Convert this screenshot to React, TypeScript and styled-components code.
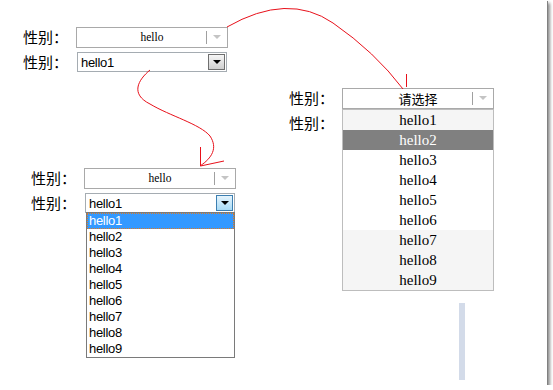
import styled, { createGlobalStyle } from "styled-components";

const GlobalStyle = createGlobalStyle`
  html, body {
    margin: 0;
    padding: 0;
    background: #fff;
  }
  body {
    font-family: "Liberation Sans", "Noto Sans CJK SC", sans-serif;
  }
`;

const Canvas = styled.div`
  position: relative;
  width: 547px;
  height: 385px;
  background: #fff;
  box-shadow: 1px 1px 0 #808080, 3px 3px 3px rgba(0, 0, 0, 0.45);
`;

// each demo sits where it was dropped on the screenshot
const Demo = styled.div<{ $x: number; $y: number }>`
  position: absolute;
  left: ${(p) => p.$x}px;
  top: ${(p) => p.$y}px;
  display: flex;
  flex-direction: column;
  gap: 5px;
`;

const Row = styled.div`
  display: flex;
  align-items: center;
  height: 20px;
`;

const Label = styled.span`
  width: 53px;
  font-family: "Noto Sans CJK SC", sans-serif;
  font-size: 15px;
  line-height: 20px;
  color: #000;
`;

/* styled (fake) select */
const FancySelect = styled.div`
  position: relative;
  width: 152px;
  height: 21px;
  box-sizing: border-box;
  border: 1px solid #a9a9a9;
  background: #fff;
  display: flex;
  z-index: 2;
`;

const FancyValue = styled.span<{ $cjk?: boolean }>`
  flex: 1;
  padding-left: 21px;
  text-align: center;
  color: #000;
  font-family: ${(p) =>
    p.$cjk ? `"Noto Sans CJK SC", sans-serif` : `"Liberation Serif", serif`};
  font-size: ${(p) => (p.$cjk ? "13px" : "11.5px")};
  line-height: 19px;
`;

const FancyArrow = styled.span`
  width: 20px;
  margin: 3px 0;
  border-left: 1px solid #a0a0a0;
  display: flex;
  align-items: center;
  justify-content: center;

  &::after {
    content: "";
    border-left: 4px solid transparent;
    border-right: 4px solid transparent;
    border-top: 4px solid #c4c4c4;
  }
`;

const FancyList = styled.ul`
  position: absolute;
  top: calc(100% + 1px);
  left: -1px;
  width: 152px;
  margin: 0;
  padding: 0;
  list-style: none;
  box-sizing: border-box;
  border: 1px solid #bdbdbd;
  background: #fff;
`;

const FancyItem = styled.li<{ $tone: "plain" | "soft" | "hot" }>`
  height: 20px;
  line-height: 20px;
  text-align: center;
  font-family: "Liberation Serif", serif;
  font-size: 15px;
  color: ${(p) => (p.$tone === "hot" ? "#fff" : "#000")};
  background: ${(p) =>
    p.$tone === "hot" ? "#808080" : p.$tone === "soft" ? "#f5f5f5" : "#fff"};
`;

/* native windows select */
const NativeSelect = styled.div`
  position: relative;
  width: 150px;
  height: 20px;
  margin-left: 1px;
  box-sizing: border-box;
  border: 1px solid #a5acb2;
  background: #fff;
  display: flex;
  align-items: center;
`;

const NativeText = styled.span`
  flex: 1;
  padding-left: 3px;
  font-family: "Liberation Sans", sans-serif;
  font-size: 13px;
  letter-spacing: -0.3px;
  color: #000;
`;

const DropButton = styled.span<{ $hot?: boolean }>`
  width: 17px;
  height: 16px;
  margin-right: 1px;
  box-sizing: border-box;
  border: 1px solid ${(p) => (p.$hot ? "#3c7fb1" : "#6f6f6f")};
  background: ${(p) =>
    p.$hot
      ? "linear-gradient(#e5f4fd, #a9dbf6)"
      : "linear-gradient(#f6f6f6, #cfcfcf)"};
  display: flex;
  align-items: center;
  justify-content: center;

  &::after {
    content: "";
    border-left: 4px solid transparent;
    border-right: 4px solid transparent;
    border-top: 4px solid #000;
  }
`;

const NativeList = styled.ul`
  position: absolute;
  top: 100%;
  left: 0;
  width: 149px;
  margin: 0;
  padding: 0;
  list-style: none;
  box-sizing: border-box;
  border: 1px solid #7a7a7a;
  background: #fff;
  z-index: 3;
`;

const NativeItem = styled.li<{ $selected?: boolean }>`
  height: 16px;
  line-height: 16px;
  padding-left: 2px;
  box-sizing: border-box;
  font-family: "Liberation Sans", sans-serif;
  font-size: 13px;
  letter-spacing: -0.3px;
  color: ${(p) => (p.$selected ? "#fff" : "#000")};
  background: ${(p) => (p.$selected ? "#3399ff" : "transparent")};
  outline: ${(p) => (p.$selected ? "1px dotted #e07a1f" : "none")};
  outline-offset: -1px;
`;

const Scrollbar = styled.div`
  position: absolute;
  left: 459px;
  top: 303px;
  width: 6px;
  height: 77px;
  background: #d3dbe9;
`;

const Arrows = styled.svg`
  position: absolute;
  left: 0;
  top: 0;
  pointer-events: none;
  z-index: 5;
`;

const options = [1, 2, 3, 4, 5, 6, 7, 8, 9].map((n) => `hello${n}`);

const toneFor = (i: number): "plain" | "soft" | "hot" => {
  if (i === 1) return "hot";
  if (i === 0 || i >= 6) return "soft";
  return "plain";
};

export default function App() {
  return (
    <>
      <GlobalStyle />
      <Canvas>
        <Demo $x={23} $y={27}>
          <Row>
            <Label>性别：</Label>
            <FancySelect>
              <FancyValue>hello</FancyValue>
              <FancyArrow />
            </FancySelect>
          </Row>
          <Row>
            <Label>性别：</Label>
            <NativeSelect>
              <NativeText>hello1</NativeText>
              <DropButton />
            </NativeSelect>
          </Row>
        </Demo>

        <Demo $x={289} $y={88}>
          <Row>
            <Label>性别：</Label>
            <FancySelect>
              <FancyValue $cjk>请选择</FancyValue>
              <FancyArrow />
              <FancyList>
                {options.map((o, i) => (
                  <FancyItem key={o} $tone={toneFor(i)}>
                    {o}
                  </FancyItem>
                ))}
              </FancyList>
            </FancySelect>
          </Row>
          <Row>
            <Label>性别：</Label>
          </Row>
        </Demo>

        <Demo $x={31} $y={168}>
          <Row>
            <Label>性别：</Label>
            <FancySelect>
              <FancyValue>hello</FancyValue>
              <FancyArrow />
            </FancySelect>
          </Row>
          <Row>
            <Label>性别：</Label>
            <NativeSelect>
              <NativeText>hello1</NativeText>
              <DropButton $hot />
              <NativeList>
                {options.map((o, i) => (
                  <NativeItem key={o} $selected={i === 0}>
                    {o}
                  </NativeItem>
                ))}
              </NativeList>
            </NativeSelect>
          </Row>
        </Demo>

        <Scrollbar />

        <Arrows width={547} height={385} viewBox="0 0 547 385">
          <g fill="none" stroke="#e8101a" strokeWidth={1}>
            <path d="M227 27 Q288 -8 333 23 Q375 52 403 89" />
            <path d="M406.5 74 L406.5 87" />
            <path d="M150 70 C138 80 130 94 150 104 C170 116 200 124 210 136 C218 148 212 158 200 166" />
            <path d="M200.5 147 L200.5 166 L224 161" />
          </g>
        </Arrows>
      </Canvas>
    </>
  );
}
